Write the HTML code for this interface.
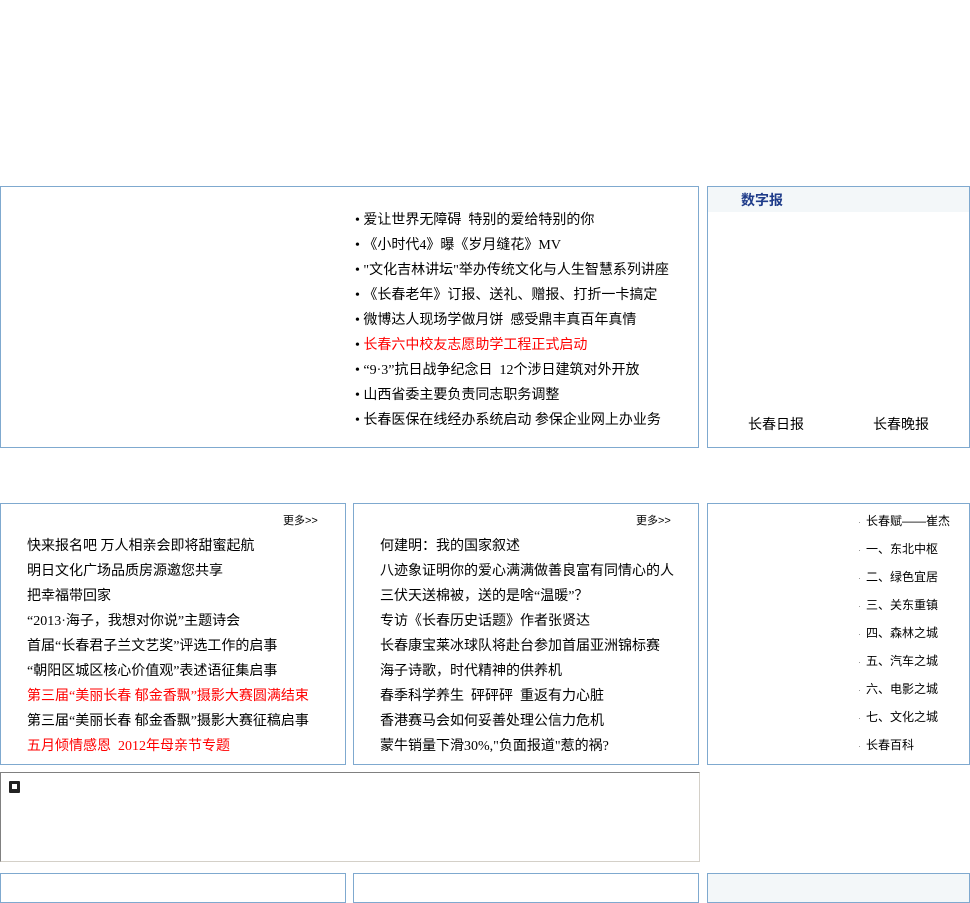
<!DOCTYPE html>
<html><head><meta charset="utf-8"><style>
*{margin:0;padding:0;box-sizing:border-box}
body{width:970px;height:882px;overflow:hidden;background:#fff;position:relative;font-family:"Liberation Serif","Noto Sans CJK SC",sans-serif;color:#000}
.b{position:absolute;border:1px solid #7fa9cf}
.t{position:absolute;font-size:14px;line-height:25px;white-space:nowrap;font-family:"Liberation Serif","Noto Sans CJK SC",sans-serif}
.t div{height:25px}
.r{color:#f00}
.s{position:absolute;font-size:12px;white-space:nowrap;font-family:"Liberation Sans","Noto Sans CJK SC",sans-serif}
.hd{position:absolute;background:#f3f7f9}
.rl{position:absolute;left:858px;top:507px;font-size:12px;line-height:28px;font-family:"Liberation Sans","Noto Sans CJK SC",sans-serif}
.rl div{height:28px}
.rl span{color:#888;font-size:9px;margin-right:5px}
</style></head><body>
<div class="b" style="left:0;top:186px;width:699px;height:262px"></div>
<div class="b" style="left:707px;top:186px;width:263px;height:262px"></div>
<div class="hd" style="left:708px;top:187px;width:261px;height:25px"></div>
<div class="s" style="left:741px;top:190px;font-size:14px;font-weight:bold;color:#1f3c8a">数字报</div>
<div class="t" style="left:355px;top:208px">
<div>• 爱让世界无障碍&nbsp; 特别的爱给特别的你</div>
<div>• 《小时代4》曝《岁月缝花》MV</div>
<div>• "文化吉林讲坛"举办传统文化与人生智慧系列讲座</div>
<div>• 《长春老年》订报、送礼、赠报、打折一卡搞定</div>
<div>• 微博达人现场学做月饼&nbsp; 感受鼎丰真百年真情</div>
<div>• <span class="r">长春六中校友志愿助学工程正式启动</span></div>
<div>• “9·3”抗日战争纪念日&nbsp; 12个涉日建筑对外开放</div>
<div>• 山西省委主要负责同志职务调整</div>
<div>• 长春医保在线经办系统启动 参保企业网上办业务</div>
</div>
<div class="t" style="left:748px;top:413px">长春日报</div>
<div class="t" style="left:873px;top:413px">长春晚报</div>

<div class="b" style="left:0;top:503px;width:346px;height:262px"></div>
<div class="b" style="left:353px;top:503px;width:346px;height:262px"></div>
<div class="b" style="left:707px;top:503px;width:263px;height:262px"></div>
<div class="s" style="left:283px;top:512px;font-size:11px">更多&gt;&gt;</div>
<div class="s" style="left:636px;top:512px;font-size:11px">更多&gt;&gt;</div>
<div class="t" style="left:27px;top:534px">
<div>快来报名吧 万人相亲会即将甜蜜起航</div>
<div>明日文化广场品质房源邀您共享</div>
<div>把幸福带回家</div>
<div>“2013·海子，我想对你说”主题诗会</div>
<div>首届“长春君子兰文艺奖”评选工作的启事</div>
<div>“朝阳区城区核心价值观”表述语征集启事</div>
<div class="r">第三届“美丽长春 郁金香飘”摄影大赛圆满结束</div>
<div>第三届“美丽长春 郁金香飘”摄影大赛征稿启事</div>
<div class="r">五月倾情感恩&nbsp; 2012年母亲节专题</div>
</div>
<div class="t" style="left:380px;top:534px">
<div>何建明：我的国家叙述</div>
<div>八迹象证明你的爱心满满做善良富有同情心的人</div>
<div>三伏天送棉被，送的是啥“温暖”？</div>
<div>专访《长春历史话题》作者张贤达</div>
<div>长春康宝莱冰球队将赴台参加首届亚洲锦标赛</div>
<div>海子诗歌，时代精神的供养机</div>
<div>春季科学养生&nbsp; 砰砰砰&nbsp; 重返有力心脏</div>
<div>香港赛马会如何妥善处理公信力危机</div>
<div>蒙牛销量下滑30%,"负面报道"惹的祸?</div>
</div>
<div class="rl">
<div><span>·</span>长春赋——崔杰</div>
<div><span>·</span>一、东北中枢</div>
<div><span>·</span>二、绿色宜居</div>
<div><span>·</span>三、关东重镇</div>
<div><span>·</span>四、森林之城</div>
<div><span>·</span>五、汽车之城</div>
<div><span>·</span>六、电影之城</div>
<div><span>·</span>七、文化之城</div>
<div><span>·</span>长春百科</div>
</div>

<div style="position:absolute;left:0;top:772px;width:700px;height:90px;border-top:1px solid #808080;border-left:1px solid #808080;border-right:1px solid #d4d0c8;border-bottom:1px solid #d4d0c8"></div>
<div style="position:absolute;left:9px;top:781px;width:11px;height:12px;background:#222;border-radius:1px"></div>
<div style="position:absolute;left:12px;top:784px;width:5px;height:5px;background:#fff"></div>

<div class="b" style="left:0;top:873px;width:346px;height:30px"></div>
<div class="b" style="left:353px;top:873px;width:346px;height:30px"></div>
<div class="b" style="left:707px;top:873px;width:263px;height:30px;background:#f3f7f9"></div>
</body></html>
